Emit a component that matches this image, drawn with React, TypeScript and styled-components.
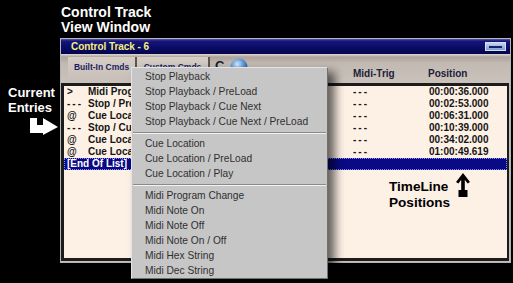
import React from "react";
import styled, { createGlobalStyle } from "styled-components";

const GlobalStyle = createGlobalStyle`
  html, body { margin: 0; padding: 0; background: #000; }
  body { width: 513px; height: 283px; overflow: hidden; font-family: "Liberation Sans", Arial, sans-serif; }
  * { box-sizing: border-box; }
`;

const Stage = styled.div`
  position: relative;
  width: 513px;
  height: 283px;
  background: #000;
  display: flex;
  overflow: hidden;
`;

const LeftRail = styled.div`
  width: 60px;
  padding: 85px 0 0 8px;
  display: flex;
  flex-direction: column;
`;

const Callout = styled.div<{ $size?: number; $color?: string; $lh?: number }>`
  font-family: "Liberation Sans", Arial, sans-serif;
  font-weight: bold;
  font-size: ${(p) => p.$size ?? 13}px;
  line-height: ${(p) => p.$lh ?? 15}px;
  color: ${(p) => p.$color ?? "#fff"};
  white-space: nowrap;
`;

const BentArrow = styled.svg`
  display: block;
  margin: 3px 0 0 22px;
`;

const Main = styled.div`
  width: 451px;
  padding-top: 5px;
  display: flex;
  flex-direction: column;
`;

const TopCallout = styled.div`
  padding-left: 1px;
  margin-bottom: 3px;
`;

const Window = styled.div`
  width: 451px;
  height: 225px;
  border: 1px solid #b4b4bc;
  background: #c6beb6;
  display: flex;
  flex-direction: column;
`;

const TitleBar = styled.div`
  height: 15px;
  flex: none;
  display: flex;
  align-items: center;
  padding: 0 4px 0 10px;
  background: linear-gradient(to bottom, #5a5aa8 0px, #16167c 2px, #0c0c68 8px, #05054c 100%);
  color: #f4f27c;
  font-weight: bold;
  font-size: 10px;
  letter-spacing: -0.05px;
`;

const MinButton = styled.div`
  margin-left: auto;
  width: 21px;
  height: 9px;
  border: 1px solid #d4e0f4;
  background: linear-gradient(to bottom, #c4d4ee, #7e9ccc);
  display: flex;
  align-items: center;
  justify-content: center;
  &::after {
    content: "";
    width: 13px;
    height: 2px;
    background: #14206a;
  }
`;

const Toolbar = styled.div`
  height: 29px;
  flex: none;
  display: flex;
  background: linear-gradient(to bottom, #e2dad2 0px, #aca49c 3px, #c2bab2 9px, #cac2ba 100%);
`;

const TabGroup = styled.div`
  width: 292px;
  flex: none;
  display: flex;
  align-items: flex-start;
  padding: 3px 0 0 7px;
`;

const CmdTab = styled.div<{ $w: number }>`
  width: ${(p) => p.$w}px;
  height: 23px;
  display: flex;
  align-items: center;
  justify-content: center;
  padding-bottom: 4px;
  background: linear-gradient(to bottom, #d6cec6, #c8c0b8);
  border-right: 2px solid #5e564e;
  color: #1c1e5e;
  font-weight: bold;
  font-size: 8.5px;
  white-space: nowrap;
`;

const CGlyph = styled.div`
  margin: 1px 0 0 5px;
  font-weight: bold;
  font-size: 13px;
  line-height: 16px;
  color: #1a1a2a;
`;

const Sphere = styled.svg`
  display: block;
  margin: 1px 0 0 6px;
`;

const HeaderCell = styled.div<{ $w?: number }>`
  ${(p) => (p.$w ? `width: ${p.$w}px; flex: none;` : "flex: 1;")}
  padding-top: 14px;
  font-weight: bold;
  font-size: 10px;
  line-height: 12px;
  color: #20203a;
  white-space: nowrap;
`;

const List = styled.div`
  flex: 1;
  margin: 0 1px 1px 0;
  border-style: solid;
  border-color: #1c1c1c;
  border-width: 3px 2px 3px 3px;
  background: #fdf0e5;
  position: relative;
  overflow: hidden;
`;

const Row = styled.div<{ $selected?: boolean }>`
  display: grid;
  grid-template-columns: 21px 265px 76px 1fr;
  padding-left: 3px;
  height: 12px;
  align-items: center;
  font-weight: bold;
  font-size: 10px;
  line-height: 12px;
  color: ${(p) => (p.$selected ? "#fff" : "#141414")};
  background: ${(p) => (p.$selected ? "#0a0a84" : "transparent")};
  outline: ${(p) => (p.$selected ? "1px dotted #8c8cff" : "none")};
  outline-offset: -1px;
  white-space: nowrap;
`;

const Cell = styled.span<{ $spaced?: boolean; $clip?: number }>`
  overflow: hidden;
  letter-spacing: ${(p) => (p.$spaced ? "2px" : "0")};
  ${(p) => (p.$clip ? `max-width: ${p.$clip}px;` : "")}
`;

const Annotation = styled.div`
  position: absolute;
  left: 325px;
  top: 87px;
  display: flex;
  align-items: flex-start;
`;

const AnnotationText = styled.div`
  padding-top: 6px;
`;

const UpArrow = styled.svg`
  display: block;
  margin-left: 6px;
`;

const Menu = styled.div`
  position: absolute;
  left: 131px;
  top: 67px;
  width: 197px;
  height: 212px;
  background: #c6c6c6;
  border: 1px solid;
  border-color: #e4e4e4 #707070 #707070 #e4e4e4;
  padding-top: 1px;
  box-shadow: 7px 5px 9px rgba(0, 0, 0, 0.6);
`;

const MenuItem = styled.div`
  height: 15px;
  line-height: 15px;
  padding-left: 13px;
  font-family: "Liberation Sans", Arial, sans-serif;
  font-size: 10.2px;
  color: #303030;
  white-space: nowrap;
`;

const MenuSeparator = styled.div`
  height: 7px;
  display: flex;
  align-items: center;
  padding: 0 1px;
  &::before {
    content: "";
    flex: 1;
    height: 1px;
    background: #8a8a8a;
    box-shadow: 0 1px 0 #f2f2f2;
  }
`;

type Entry = { mark: string; name: string; trig: string; pos: string };

const entries: Entry[] = [
  { mark: ">", name: "Midi Program Change", trig: "---", pos: "00:00:36.000" },
  { mark: "---", name: "Stop / PreLoad", trig: "---", pos: "00:02:53.000" },
  { mark: "@", name: "Cue Location", trig: "---", pos: "00:06:31.000" },
  { mark: "---", name: "Stop / Cue Next", trig: "---", pos: "00:10:39.000" },
  { mark: "@", name: "Cue Location", trig: "---", pos: "00:34:02.000" },
  { mark: "@", name: "Cue Location / Play", trig: "---", pos: "01:00:49.619" },
];

const menuGroups: string[][] = [
  [
    "Stop Playback",
    "Stop Playback / PreLoad",
    "Stop Playback / Cue Next",
    "Stop Playback / Cue Next / PreLoad",
  ],
  ["Cue Location", "Cue Location / PreLoad", "Cue Location / Play"],
  [
    "Midi Program Change",
    "Midi Note On",
    "Midi Note Off",
    "Midi Note On / Off",
    "Midi Hex String",
    "Midi Dec String",
  ],
];

export default function App() {
  return (
    <Stage>
      <GlobalStyle />
      <LeftRail>
        <Callout>Current</Callout>
        <Callout>Entries</Callout>
        <BentArrow width="28" height="17" viewBox="0 0 28 17">
          <rect x="0" y="0" width="7" height="15" fill="#fff" />
          <rect x="0" y="7" width="15" height="8" fill="#fff" />
          <polygon points="13,0 28,9 13,17" fill="#fff" />
        </BentArrow>
      </LeftRail>
      <Main>
        <TopCallout>
          <Callout $size={14}>Control Track</Callout>
          <Callout $size={14}>View Window</Callout>
        </TopCallout>
        <Window>
          <TitleBar>
            Control Track - 6
            <MinButton />
          </TitleBar>
          <Toolbar>
            <TabGroup>
              <CmdTab $w={69}>Built-In Cmds</CmdTab>
              <CmdTab $w={73}>Custom Cmds</CmdTab>
              <CGlyph>C</CGlyph>
              <Sphere width="18" height="18" viewBox="0 0 18 18">
                <defs>
                  <radialGradient id="sph" cx="0.4" cy="0.35" r="0.65">
                    <stop offset="0" stopColor="#d8ecff" />
                    <stop offset="0.5" stopColor="#6aa2dc" />
                    <stop offset="1" stopColor="#2a5a9c" />
                  </radialGradient>
                </defs>
                <circle cx="9" cy="9" r="8.5" fill="url(#sph)" />
              </Sphere>
            </TabGroup>
            <HeaderCell $w={75}>Midi-Trig</HeaderCell>
            <HeaderCell>Position</HeaderCell>
          </Toolbar>
          <List>
            {entries.map((e, i) => (
              <Row key={i}>
                <Cell $spaced={e.mark === "---"}>{e.mark}</Cell>
                <Cell $clip={43}>{e.name}</Cell>
                <Cell $spaced>{e.trig}</Cell>
                <Cell>{e.pos}</Cell>
              </Row>
            ))}
            <Row $selected>
              <Cell style={{ gridColumn: "1 / 3" }}>[End Of List]</Cell>
            </Row>
            <Annotation>
              <AnnotationText>
                <Callout $size={13.6} $color="#000" $lh={16}>
                  TimeLine
                </Callout>
                <Callout $size={13.6} $color="#000" $lh={16}>
                  Positions
                </Callout>
              </AnnotationText>
              <UpArrow width="14" height="25" viewBox="0 0 14 25">
                <path
                  d="M7 0 L14 9 L11.6 10.6 L8.8 6.8 L8.8 17 L11.5 17 L11.5 24 L2.5 24 L2.5 17 L5.2 17 L5.2 6.8 L2.4 10.6 L0 9 Z"
                  fill="#000"
                />
              </UpArrow>
            </Annotation>
          </List>
        </Window>
      </Main>
      <Menu>
        {menuGroups.map((g, gi) => (
          <React.Fragment key={gi}>
            {gi > 0 && <MenuSeparator />}
            {g.map((label) => (
              <MenuItem key={label}>{label}</MenuItem>
            ))}
          </React.Fragment>
        ))}
      </Menu>
    </Stage>
  );
}
